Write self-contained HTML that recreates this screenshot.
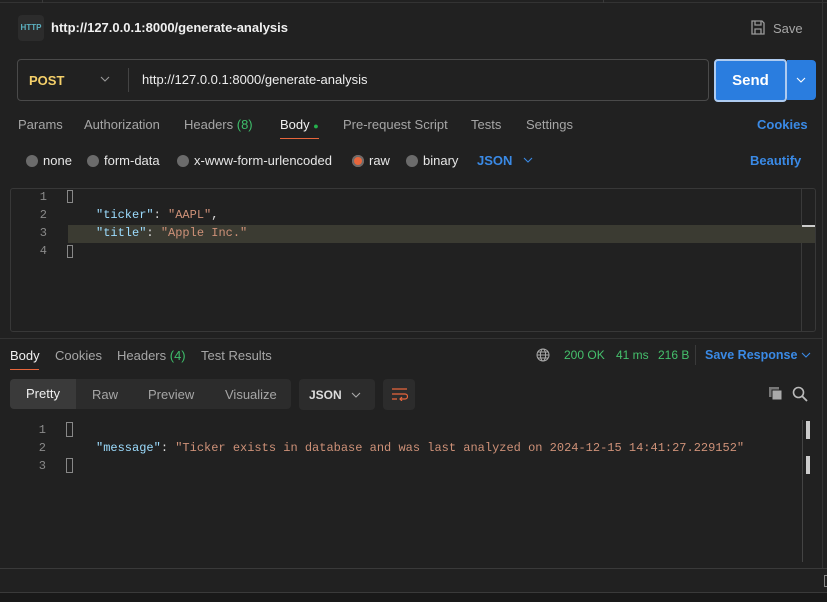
<!DOCTYPE html>
<html><head><meta charset="utf-8"><style>
*{margin:0;padding:0;box-sizing:border-box}
body{width:827px;height:602px;background:#212121;font-family:"Liberation Sans",sans-serif;color:#ddd;position:relative;overflow:hidden;font-size:13px}
.a{position:absolute;white-space:nowrap}
.mono{font-family:"Liberation Mono",monospace;font-size:12px}
.g{color:#a6a6a6}
.dot{display:inline-block;width:12px;height:12px;border-radius:50%;background:#6b6b6b;vertical-align:-2px;margin-right:5px}
.ln{color:#8a8a8a;text-align:right;width:20px}
.k{color:#9cdcfe}.s{color:#ce9178}
</style></head><body>
<div class="a" style="left:0;top:0;width:827px;height:3px;border-bottom:1px solid #333"></div>
<div class="a" style="left:42px;top:0;width:1px;height:3px;background:#3a3a3a"></div>
<div class="a" style="left:603px;top:0;width:1px;height:3px;background:#3a3a3a"></div>
<div class="a" style="left:822px;top:0;width:1px;height:568px;background:#333"></div>
<div class="a" style="left:18px;top:15px;width:26px;height:26px;background:#2c2c2c;border-radius:4px;color:#5bb0c0;font-size:8px;font-weight:bold;text-align:center;line-height:26px">HTTP</div>
<div class="a" style="left:51px;top:20px;font-weight:bold;color:#f0f0f0;font-size:13px">http://127.0.0.1:8000/generate-analysis</div>
<svg class="a" style="left:751px;top:20px" width="14" height="15" viewBox="0 0 14 15"><path d="M1 1h10l2 2v11H1z M4 1v4h6V1 M4 14V9h6v5" fill="none" stroke="#9a9a9a" stroke-width="1.3"/></svg>
<div class="a g" style="left:773px;top:21px">Save</div>
<div class="a" style="left:17px;top:59px;width:692px;height:42px;border:1px solid #4a4a4a;border-radius:4px"></div>
<div class="a" style="left:29px;top:73px;font-weight:bold;color:#f5d06a;font-size:13px">POST</div>
<svg class="a" style="left:100px;top:76px" width="10" height="6"><path d="M1 1l4 4 4-4" fill="none" stroke="#999" stroke-width="1.1"/></svg>
<div class="a" style="left:128px;top:68px;width:1px;height:24px;background:#444"></div>
<div class="a" style="left:142px;top:72px;color:#eee">http://127.0.0.1:8000/generate-analysis</div>
<div class="a" style="left:714px;top:59px;width:73px;height:43px;background:#2a7ddf;border:2px solid #aecbf0;border-radius:4px;color:#fff;font-weight:bold;font-size:15px;text-align:center;line-height:39px">Send</div>
<div class="a" style="left:787px;top:60px;width:29px;height:40px;background:#2a7ddf;border-radius:0 4px 4px 0"></div>
<svg class="a" style="left:796px;top:77px" width="10" height="6"><path d="M1 1l4 4 4-4" fill="none" stroke="#fff" stroke-width="1.1"/></svg>
<div class="a g" style="left:18px;top:117px">Params</div>
<div class="a g" style="left:84px;top:117px">Authorization</div>
<div class="a g" style="left:184px;top:117px">Headers <span style="color:#3ebd6a">(8)</span></div>
<div class="a" style="left:280px;top:117px;color:#f0f0f0">Body <span style="color:#25b14d;font-size:9px">&#9679;</span></div>
<div class="a" style="left:280px;top:138px;width:39px;height:1px;background:#e8663c"></div>
<div class="a g" style="left:343px;top:117px">Pre-request Script</div>
<div class="a g" style="left:471px;top:117px">Tests</div>
<div class="a g" style="left:526px;top:117px">Settings</div>
<div class="a" style="left:757px;top:117px;color:#3a8ae6;font-weight:bold">Cookies</div>
<div class="a" style="left:26px;top:153px;color:#e6e6e6"><span class="dot"></span>none</div>
<div class="a" style="left:87px;top:153px;color:#e6e6e6"><span class="dot"></span>form-data</div>
<div class="a" style="left:177px;top:153px;color:#e6e6e6"><span class="dot"></span>x-www-form-urlencoded</div>
<div class="a" style="left:352px;top:153px;color:#e6e6e6"><span class="dot" style="background:#e8663c;box-shadow:0 0 0 2px #6b6b6b inset"></span>raw</div>
<div class="a" style="left:406px;top:153px;color:#e6e6e6"><span class="dot"></span>binary</div>
<div class="a" style="left:477px;top:153px;color:#3a8ae6;font-weight:bold">JSON</div>
<svg class="a" style="left:523px;top:157px" width="10" height="6"><path d="M1 1l4 4 4-4" fill="none" stroke="#3a8ae6" stroke-width="1.1"/></svg>
<div class="a" style="left:750px;top:153px;color:#3a8ae6;font-weight:bold">Beautify</div>
<div class="a" style="left:10px;top:188px;width:806px;height:144px;border:1px solid #383838;border-radius:3px"></div>
<div class="a" style="left:801px;top:189px;width:1px;height:142px;background:#3a3a3a"></div>
<div class="a" style="left:68px;top:225px;width:747px;height:18px;background:#3b3b32"></div>
<div class="a" style="left:802px;top:225px;width:13px;height:2px;background:#ccc"></div>
<div class="a" style="left:67px;top:190px;width:6px;height:13px;border:1px solid #888"></div>
<div class="a" style="left:67px;top:245px;width:6px;height:13px;border:1px solid #888"></div>
<div class="a mono ln" style="left:27px;top:190px">1</div>
<div class="a mono ln" style="left:27px;top:208px">2</div>
<div class="a mono ln" style="left:27px;top:226px">3</div>
<div class="a mono ln" style="left:27px;top:244px">4</div>
<div class="a mono" style="left:96px;top:208px"><span class="k">"ticker"</span>: <span class="s">"AAPL"</span>,</div>
<div class="a mono" style="left:96px;top:226px"><span class="k">"title"</span>: <span class="s">"Apple Inc."</span></div>
<div class="a" style="left:0;top:338px;width:822px;height:1px;background:#333"></div>
<div class="a" style="left:10px;top:348px;color:#f0f0f0">Body</div>
<div class="a" style="left:10px;top:369px;width:29px;height:1px;background:#e8663c"></div>
<div class="a g" style="left:55px;top:348px">Cookies</div>
<div class="a g" style="left:117px;top:348px">Headers <span style="color:#3ebd6a">(4)</span></div>
<div class="a g" style="left:201px;top:348px">Test Results</div>
<svg class="a" style="left:536px;top:348px" width="14" height="14" viewBox="0 0 14 14"><g fill="none" stroke="#aaa" stroke-width="1"><circle cx="7" cy="7" r="6"/><ellipse cx="7" cy="7" rx="2.6" ry="6"/><path d="M1 7h12M2 4h10M2 10h10"/></g></svg>
<div class="a" style="left:564px;top:348px;color:#45c06c;font-size:12px">200 OK</div>
<div class="a" style="left:616px;top:348px;color:#45c06c;font-size:12px">41 ms</div>
<div class="a" style="left:658px;top:348px;color:#45c06c;font-size:12px">216 B</div>
<div class="a" style="left:695px;top:345px;width:1px;height:20px;background:#3a3a3a"></div>
<div class="a" style="left:705px;top:348px;color:#3a8ae6;font-weight:bold;font-size:12.5px">Save Response</div>
<svg class="a" style="left:801px;top:352px" width="10" height="6"><path d="M1 1l4 4 4-4" fill="none" stroke="#3a8ae6" stroke-width="1.1"/></svg>
<div class="a" style="left:10px;top:379px;width:281px;height:30px;background:#2c2c2c;border-radius:4px"></div>
<div class="a" style="left:10px;top:379px;width:66px;height:30px;background:#3a3a3a;border-radius:4px 0 0 4px;color:#f0f0f0;text-align:center;line-height:30px">Pretty</div>
<div class="a g" style="left:92px;top:387px">Raw</div>
<div class="a g" style="left:148px;top:387px">Preview</div>
<div class="a g" style="left:225px;top:387px">Visualize</div>
<div class="a" style="left:299px;top:379px;width:76px;height:31px;background:#2c2c2c;border-radius:4px"></div>
<div class="a" style="left:309px;top:388px;color:#ddd;font-weight:bold;font-size:12px">JSON</div>
<svg class="a" style="left:351px;top:392px" width="10" height="6"><path d="M1 1l4 4 4-4" fill="none" stroke="#aaa" stroke-width="1.1"/></svg>
<div class="a" style="left:383px;top:379px;width:32px;height:31px;background:#2c2c2c;border-radius:4px"></div>
<svg class="a" style="left:391px;top:388px" width="17" height="13" viewBox="0 0 17 13"><path d="M1 1h15M1 6h13a2.5 2.5 0 0 1 0 5h-5M11 9l-2 2 2 2M1 11h5" fill="none" stroke="#e8663c" stroke-width="1.2"/></svg>
<svg class="a" style="left:768px;top:386px" width="16" height="16" viewBox="0 0 16 16"><rect x="1" y="1" width="10" height="10" fill="#777"/><rect x="4" y="4" width="10" height="10" fill="#aaa" stroke="#212121"/></svg>
<svg class="a" style="left:792px;top:386px" width="16" height="16" viewBox="0 0 16 16"><circle cx="6.5" cy="6.5" r="5" fill="none" stroke="#bbb" stroke-width="1.6"/><path d="M10 10l5 5" stroke="#bbb" stroke-width="1.8"/></svg>
<div class="a" style="left:66px;top:422px;width:7px;height:15px;border:1px solid #888"></div>
<div class="a" style="left:66px;top:458px;width:7px;height:15px;border:1px solid #888"></div>
<div class="a mono ln" style="left:26px;top:423px">1</div>
<div class="a mono ln" style="left:26px;top:441px">2</div>
<div class="a mono ln" style="left:26px;top:459px">3</div>
<div class="a mono" style="left:96px;top:441px"><span class="k">"message"</span>: <span class="s">"Ticker exists in database and was last analyzed on 2024-12-15 14:41:27.229152"</span></div>
<div class="a" style="left:806px;top:421px;width:4px;height:18px;background:#ccc"></div>
<div class="a" style="left:806px;top:456px;width:4px;height:18px;background:#ccc"></div>
<div class="a" style="left:802px;top:420px;width:1px;height:142px;background:#444"></div>
<div class="a" style="left:0;top:568px;width:827px;height:1px;background:#3a3a3a"></div>
<div class="a" style="left:0;top:592px;width:827px;height:10px;background:#191919;border-top:1px solid #3a3a3a"></div>
<div class="a" style="left:824px;top:575px;width:4px;height:12px;border:1px solid #888"></div>
</body></html>
